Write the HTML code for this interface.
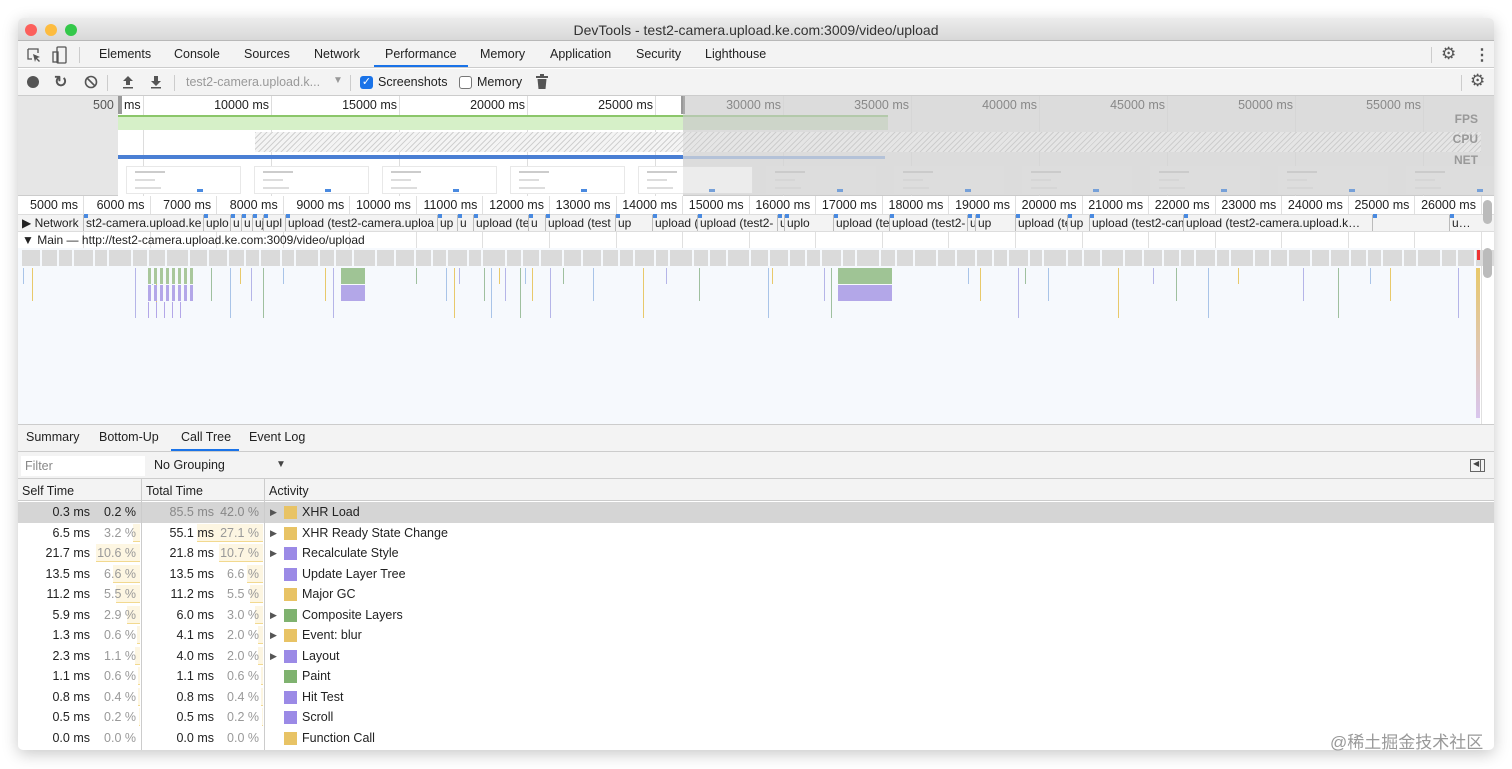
<!DOCTYPE html>
<html><head><meta charset="utf-8">
<style>
*{box-sizing:border-box;margin:0;padding:0}
body{width:1512px;height:769px;background:#fff;font-family:"Liberation Sans",Arial,sans-serif;font-size:12.5px;color:#222;position:relative;overflow:hidden}
.a{position:absolute}
#win{left:18px;top:18px;width:1476px;height:732px;background:#fff;box-shadow:0 4px 16px rgba(0,0,0,.22);border-radius:5px;overflow:hidden}
.t{position:absolute;white-space:nowrap}
.hl{position:absolute;height:1px;background:#ccc}
.vl{position:absolute;width:1px}
</style></head><body>
<div id="win" class="a">
 <div class="a" style="left:0;top:0;width:1476px;height:23px;background:linear-gradient(#ececec,#d8d8d8);border-bottom:1px solid #b8b8b8"></div>
 <div class="a" style="left:7px;top:6px;width:12px;height:12px;border-radius:50%;background:#fc605c"></div>
 <div class="a" style="left:27px;top:6px;width:12px;height:12px;border-radius:50%;background:#fdbc40"></div>
 <div class="a" style="left:47px;top:6px;width:12px;height:12px;border-radius:50%;background:#34c84a"></div>
 <div class="t" style="left:0;width:1476px;text-align:center;top:4px;font-size:14px;color:#333">DevTools - test2-camera.upload.ke.com:3009/video/upload</div>
 <div class="a" style="left:0;top:23px;width:1476px;height:27px;background:#f3f3f3;border-bottom:1px solid #ccc"></div>
 <svg class="a" style="left:8px;top:29px" width="16" height="16" viewBox="0 0 16 16"><path d="M2 2h10v4M2 2v10h4" fill="none" stroke="#555" stroke-width="1.3"/><path d="M7 7l7 3-3 1 3 3-1 1-3-3-1 3z" fill="#555"/></svg>
 <svg class="a" style="left:34px;top:28px" width="16" height="18" viewBox="0 0 16 18"><rect x="5" y="1" width="9" height="16" rx="1" fill="none" stroke="#555" stroke-width="1.3"/><rect x="1" y="6" width="5" height="10" fill="none" stroke="#555" stroke-width="1.3"/></svg>
 <div class="a" style="left:61px;top:29px;width:1px;height:16px;background:#ccc"></div>
 <div class="t" style="left:81px;top:29px">Elements</div>
 <div class="t" style="left:156px;top:29px">Console</div>
 <div class="t" style="left:226px;top:29px">Sources</div>
 <div class="t" style="left:296px;top:29px">Network</div>
 <div class="t" style="left:367px;top:29px">Performance</div>
 <div class="a" style="left:356px;top:47px;width:94px;height:2px;background:#1a73e8"></div>
 <div class="t" style="left:462px;top:29px">Memory</div>
 <div class="t" style="left:532px;top:29px">Application</div>
 <div class="t" style="left:618px;top:29px">Security</div>
 <div class="t" style="left:687px;top:29px">Lighthouse</div>
 <div class="a" style="left:1413px;top:29px;width:1px;height:16px;background:#ccc"></div>
 <div class="t" style="left:1423px;top:26px;font-size:17px;color:#555">⚙</div>
 <div class="t" style="left:1456px;top:27px;font-size:16px;color:#555;font-weight:bold">⋮</div>
 <div class="a" style="left:0;top:51px;width:1476px;height:27px;background:#f3f3f3;border-bottom:1px solid #ccc"></div>
 <div class="a" style="left:9px;top:58px;width:12px;height:12px;border-radius:50%;background:#555"></div>
 <div class="t" style="left:36px;top:54px;font-size:16px;color:#555;font-weight:bold">↻</div>
 <svg class="a" style="left:66px;top:57px" width="14" height="14"><circle cx="7" cy="7" r="5.5" fill="none" stroke="#555" stroke-width="1.6"/><path d="M3 3l8 8" stroke="#555" stroke-width="1.6"/></svg>
 <div class="a" style="left:89px;top:57px;width:1px;height:16px;background:#ccc"></div>
 <svg class="a" style="left:104px;top:57px" width="12" height="14"><path d="M6 1l5 5H8v4H4V6H1z M1 12h10v1.5H1z" fill="#555"/></svg>
 <svg class="a" style="left:132px;top:57px" width="12" height="14"><path d="M4 1h4v5h3L6 11 1 6h3z M1 12h10v1.5H1z" fill="#555"/></svg>
 <div class="a" style="left:156px;top:57px;width:1px;height:16px;background:#ccc"></div>
 <div class="t" style="left:168px;top:57px;color:#999">test2-camera.upload.k...</div>
 <div class="t" style="left:315px;top:57px;color:#999;font-size:10px">▼</div>
 <div class="a" style="left:332px;top:57px;width:1px;height:16px;background:#ccc"></div>
 <div class="a" style="left:342px;top:58px;width:13px;height:13px;border-radius:3px;background:#1a73e8;color:#fff;font-size:11px;line-height:13px;text-align:center">✓</div>
 <div class="t" style="left:360px;top:57px">Screenshots</div>
 <div class="a" style="left:441px;top:58px;width:13px;height:13px;border-radius:3px;border:1px solid #777;background:#fff"></div>
 <div class="t" style="left:459px;top:57px">Memory</div>
 <svg class="a" style="left:518px;top:56px" width="12" height="15"><rect x="0" y="2" width="12" height="2" fill="#555"/><rect x="4" y="0" width="4" height="2" fill="#555"/><path d="M1.5 5h9l-1 10h-7z" fill="#555"/></svg>
 <div class="a" style="left:1443px;top:57px;width:1px;height:16px;background:#ccc"></div>
 <div class="t" style="left:1452px;top:53px;font-size:17px;color:#555">⚙</div>

 <div id="ov" class="a" style="left:0;top:78px;width:1476px;height:100px;background:#e6e6e6;border-bottom:1px solid #ccc"></div>
 <div id="rul" class="a" style="left:0;top:178px;width:1476px;height:18px;background:#fff"></div>
 <div class="a" style="left:0;top:196px;width:1476px;height:18px;background:#f3f3f3;border-top:1px solid #ddd;border-bottom:1px solid #ddd"></div>
 <div id="net" class="a" style="left:0;top:196px;width:1476px;height:18px"></div>
 <div class="t" style="left:4px;top:215px;font-size:12px">▼ Main — http://test2-camera.upload.ke.com:3009/video/upload</div>
 <div class="a" style="left:0;top:230px;width:1462px;height:176px;background:#f6f9fd"></div>
 <div id="fl" class="a" style="left:0;top:230px;width:1462px;height:176px"></div>
 <div class="a" style="left:1465px;top:182px;width:9px;height:24px;border-radius:5px;background:#bbb"></div>
 <div class="a" style="left:1465px;top:230px;width:9px;height:30px;border-radius:5px;background:#bbb"></div>

 <div class="a" style="left:0;top:406px;width:1476px;height:28px;background:#f3f3f3;border-top:1px solid #ccc;border-bottom:1px solid #ccc"></div>
 <div class="t" style="left:8px;top:412px">Summary</div>
 <div class="t" style="left:81px;top:412px">Bottom-Up</div>
 <div class="t" style="left:163px;top:412px">Call Tree</div>
 <div class="a" style="left:153px;top:431px;width:68px;height:2px;background:#1a73e8"></div>
 <div class="t" style="left:231px;top:412px">Event Log</div>
 <div class="a" style="left:0;top:434px;width:1476px;height:27px;background:#f3f3f3;border-bottom:1px solid #ccc"></div>
 <div class="a" style="left:3px;top:438px;width:124px;height:20px;background:#fff"></div>
 <div class="t" style="left:7px;top:441px;color:#888">Filter</div>
 <div class="t" style="left:136px;top:440px">No Grouping</div>
 <div class="t" style="left:258px;top:441px;font-size:10px;color:#444">▼</div>
 <div class="a" style="left:1452px;top:441px;width:15px;height:13px;border:1px solid #666"></div>
 <div class="t" style="left:1455px;top:441px;font-size:8px;color:#444">◀</div>
 <div class="a" style="left:1462px;top:441px;width:1px;height:13px;background:#666"></div>
 <div class="a" style="left:0;top:461px;width:1476px;height:22px;background:#f3f3f3;border-bottom:1px solid #ccc"></div>
 <div class="t" style="left:4px;top:466px">Self Time</div>
 <div class="t" style="left:128px;top:466px">Total Time</div>
 <div class="t" style="left:251px;top:466px">Activity</div>
 <div id="rows" class="a" style="left:0;top:484px;width:1476px;height:250px"></div>
 <div class="a" style="left:123px;top:461px;width:1px;height:272px;background:#ccc"></div>
 <div class="a" style="left:246px;top:461px;width:1px;height:272px;background:#ccc"></div>
</div>
<div class="t" style="left:1330px;top:728px;font-size:17px;color:#999;font-family:'Liberation Sans','Noto Sans CJK SC',sans-serif">@稀土掘金技术社区</div>
<script>
var W=18;
var ov=document.getElementById('ov'),s='';
s+='<div class="a" style="left:100px;top:0;width:565px;height:100px;background:#fff"></div>';
s+='<div class="a" style="left:100px;top:0;width:4px;height:18px;background:#999"></div><div class="a" style="left:663px;top:0;width:4px;height:18px;background:#999"></div>';
for(var i=0;i<11;i++){var x=125+128*i;s+='<div class="vl" style="left:'+x+'px;top:0;height:100px;background:#ddd"></div>';}
var labs=['10000','15000','20000','25000','30000','35000','40000','45000','50000','55000'];
s+='<div class="t" style="left:75px;top:2px;color:#555">500</div><div class="t" style="left:106px;top:2px">ms</div>';
for(i=0;i<10;i++){var r=1421-128*(9-i)-W;s+='<div class="t" style="left:'+(r-64)+'px;width:64px;text-align:right;top:2px;color:'+(i<4?'#222':'#666')+'">'+labs[i]+' ms</div>';}
s+='<div class="a" style="left:100px;top:19px;width:565px;height:15px;background:#d6f0c8;border-top:2px solid #8bc66a"></div>';
s+='<div class="a" style="left:665px;top:19px;width:205px;height:15px;background:#cfdcc9;border-top:2px solid #a8c99a"></div>';
s+='<div class="a" style="left:237px;top:36px;width:1226px;height:20px;background:repeating-linear-gradient(135deg,#d0d0d0 0 1px,#f4f4f4 1px 4px)"></div>';
s+='<div class="a" style="left:100px;top:59px;width:565px;height:4px;background:#4a7fd4"></div><div class="a" style="left:665px;top:60px;width:202px;height:3px;background:#a9bfe0"></div>';
for(i=0;i<12;i++){var x=100+i*128+8;var sel=x<660;s+='<div class="a" style="left:'+x+'px;top:70px;width:'+(sel?115:110)+'px;height:28px;background:'+(sel?'#fff':'#e9e9e9')+';border:1px solid #e8e8e8"><div class="a" style="left:8px;top:4px;width:30px;height:2px;background:#ccc"></div><div class="a" style="left:8px;top:12px;width:20px;height:2px;background:#ddd"></div><div class="a" style="left:8px;top:20px;width:26px;height:2px;background:#ddd"></div><div class="a" style="left:70px;top:22px;width:6px;height:3px;background:#4a8ae0"></div></div>';}
s+='<div class="a" style="left:665px;top:0;width:811px;height:100px;background:rgba(200,200,200,.35)"></div>';
s+='<div class="t" style="right:16px;top:16px;color:#999;font-weight:bold;font-size:12px">FPS</div><div class="t" style="right:16px;top:36px;color:#999;font-weight:bold;font-size:12px">CPU</div><div class="t" style="right:16px;top:57px;color:#999;font-weight:bold;font-size:12px">NET</div>';
ov.innerHTML=s;
var rul=document.getElementById('rul');s='';
for(i=0;i<22;i++){var r=78+66.57*i-W;s+='<div class="t" style="left:'+(r-60)+'px;width:60px;text-align:right;top:2px">'+(5000+1000*i)+' ms</div>';s+='<div class="vl" style="left:'+(r+5)+'px;top:0;height:228px;background:#e0e0e0"></div>';}
rul.innerHTML=s;
var net=document.getElementById('net');
var nb=[[66,'st2-camera.upload.ke'],[186,'uplo'],[213,'u'],[224,'u'],[235,'uj'],[246,'upl'],[268,'upload (test2-camera.uploa'],[420,'up'],[440,'u'],[456,'upload (te'],[511,'u'],[528,'upload (test'],[598,'up'],[635,'upload (te'],[680,'upload (test2-'],[760,'u'],[767,'uplo'],[816,'upload (test'],[872,'upload (test2-'],[950,'u'],[958,'up'],[998,'upload (tes'],[1050,'up'],[1072,'upload (test2-cam'],[1166,'upload (test2-camera.upload.k…'],[1355,''],[1432,'u…']];
s='<div class="t" style="left:4px;top:2px;font-size:12px">▶ Network</div>';
for(i=0;i<nb.length;i++){var x=nb[i][0],nx=(i+1<nb.length?nb[i+1][0]:1455);s+='<div class="a" style="left:'+(x-1)+'px;top:1px;width:'+(nx-x)+'px;height:16px;border-left:1px solid #bbb;overflow:hidden;white-space:nowrap;font-size:12px;padding-left:2px;line-height:16px">'+nb[i][1]+'</div><div class="a" style="left:'+x+'px;top:0;width:4px;height:4px;background:#4a8ae0"></div>';}
net.innerHTML=s;
var fl=document.getElementById('fl');s='';
for(var x=4;x<1460;x+=14+(x*7%11)){s+='<div class="a" style="left:'+x+'px;top:2px;width:'+(12+(x*7%11))+'px;height:16px;background:#dadada"></div>';}
s+='<div class="a" style="left:1459px;top:2px;width:3px;height:10px;background:#e33"></div>';
var col=['#a9c4e8','#e8c96b','#b5b5e8','#9fc09f'];
var xs=[5,14,117,130,134,138,148,193,212,222,233,245,265,307,315,398,428,436,441,466,473,481,487,502,507,514,532,545,575,625,648,681,750,754,806,813,950,962,1000,1007,1030,1100,1135,1158,1190,1220,1285,1320,1352,1372,1440];
for(i=0;i<xs.length;i++){var c=col[i%4];s+='<div class="a" style="left:'+xs[i]+'px;top:20px;width:1px;height:'+(16+(i*37%3)*17)+'px;background:'+c+'"></div>';}
var blk=[[323,24],[820,34],[848,26]];
for(i=0;i<3;i++){s+='<div class="a" style="left:'+blk[i][0]+'px;top:20px;width:'+blk[i][1]+'px;height:16px;background:#9fc495"></div><div class="a" style="left:'+blk[i][0]+'px;top:37px;width:'+blk[i][1]+'px;height:16px;background:#b3a7e8"></div>';}
s+='<div class="a" style="left:130px;top:20px;width:45px;height:16px;background:repeating-linear-gradient(90deg,#a9c79c 0 3px,#f6f9fd 3px 6px)"></div><div class="a" style="left:130px;top:37px;width:45px;height:16px;background:repeating-linear-gradient(90deg,#b3a7e8 0 3px,#f6f9fd 3px 6px)"></div><div class="a" style="left:130px;top:54px;width:40px;height:16px;background:repeating-linear-gradient(90deg,#b3a7e8 0 1px,#f6f9fd 1px 8px)"></div>';
s+='<div class="a" style="left:1458px;top:20px;width:4px;height:150px;background:linear-gradient(#e8c96b,#d9c6ee)"></div>';
fl.innerHTML=s;
var rows=[['0.3 ms','0.2 %','85.5 ms','42.0 %',1,'#e8c365','XHR Load',0,0],
['6.5 ms','3.2 %','55.1 ms','27.1 %',1,'#e8c365','XHR Ready State Change',6,60],
['21.7 ms','10.6 %','21.8 ms','10.7 %',1,'#9b8ae6','Recalculate Style',40,40],
['13.5 ms','6.6 %','13.5 ms','6.6 %',0,'#9b8ae6','Update Layer Tree',25,15],
['11.2 ms','5.5 %','11.2 ms','5.5 %',0,'#e8c365','Major GC',22,12],
['5.9 ms','2.9 %','6.0 ms','3.0 %',1,'#7fb26f','Composite Layers',12,7],
['1.3 ms','0.6 %','4.1 ms','2.0 %',1,'#e8c365','Event: blur',3,5],
['2.3 ms','1.1 %','4.0 ms','2.0 %',1,'#9b8ae6','Layout',5,5],
['1.1 ms','0.6 %','1.1 ms','0.6 %',0,'#7fb26f','Paint',2,2],
['0.8 ms','0.4 %','0.8 ms','0.4 %',0,'#9b8ae6','Hit Test',2,2],
['0.5 ms','0.2 %','0.5 ms','0.2 %',0,'#9b8ae6','Scroll',1,1],
['0.0 ms','0.0 %','0.0 ms','0.0 %',0,'#e8c365','Function Call',0,0]];
var R=document.getElementById('rows');s='';
for(i=0;i<rows.length;i++){var r=rows[i],y=i*20.5,sel=i==0;
s+='<div class="a" style="left:0;top:'+y+'px;width:1476px;height:20.5px;background:'+(sel?'#d5d5d5':'#fff')+'"></div>';
if(r[7]){var w=r[7]*1.1;s+='<div class="a" style="left:'+(122-w)+'px;top:'+(y+1)+'px;width:'+w+'px;height:18px;background:#fdf6e2;border-bottom:1px solid #f2d98f"></div>';}
if(r[8]){var w=r[8]*1.1;s+='<div class="a" style="left:'+(245-w)+'px;top:'+(y+1)+'px;width:'+w+'px;height:18px;background:#fdf6e2;border-bottom:1px solid #f2d98f"></div>';}
var g=sel?'#222':'#999';
s+='<div class="t" style="left:0;width:72px;text-align:right;top:'+(y+3)+'px">'+r[0]+'</div>';
s+='<div class="t" style="left:70px;width:48px;text-align:right;top:'+(y+3)+'px;color:'+g+'">'+r[1]+'</div>';
s+='<div class="t" style="left:120px;width:76px;text-align:right;top:'+(y+3)+'px;color:'+(sel?'#888':'#222')+'">'+r[2]+'</div>';
s+='<div class="t" style="left:190px;width:51px;text-align:right;top:'+(y+3)+'px;color:'+(sel?'#888':'#999')+'">'+r[3]+'</div>';
if(r[4])s+='<div class="t" style="left:252px;top:'+(y+5)+'px;font-size:9px;color:#555">▶</div>';
s+='<div class="a" style="left:266px;top:'+(y+4)+'px;width:13px;height:13px;background:'+r[5]+'"></div>';
s+='<div class="t" style="left:284px;top:'+(y+3)+'px">'+r[6]+'</div>';}
R.innerHTML=s;
</script>
</body></html>
